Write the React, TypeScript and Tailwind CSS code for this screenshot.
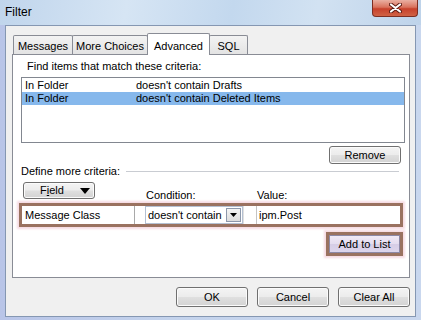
import React from 'react'

const btn =
  'flex items-center justify-center rounded-[3px] border border-[#707070] bg-[linear-gradient(#f4f4f4,#ececec_48%,#dfdfdf_52%,#d3d3d3)] shadow-[inset_0_0_0_1px_#fbfbfb] text-black'

function Tab({ label, active, w }: { label: string; active?: boolean; w: string }) {
  if (active) {
    return (
      <div
        className={`relative z-10 -ml-px -mb-px h-[22px] ${w} flex items-start justify-center pt-[4px] border border-b-0 border-[#898c95] bg-white rounded-t-[2px]`}
      >
        {label}
      </div>
    )
  }
  return (
    <div
      className={`${w} -ml-px first:ml-0 h-[19px] flex items-center justify-center pt-[2px] border border-b-0 border-[#898c95] bg-[linear-gradient(#f3f3f3,#e3e3e3)] rounded-t-[2px]`}
    >
      {label}
    </div>
  )
}

function CloseGlyph() {
  return (
    <svg width="13" height="10" viewBox="0 0 13 10">
      <path d="M2 1.5 L11 8.5 M11 1.5 L2 8.5" stroke="#5a1a12" strokeWidth="4" strokeLinecap="round" />
      <path d="M2 1.5 L11 8.5 M11 1.5 L2 8.5" stroke="#ffffff" strokeWidth="2.2" strokeLinecap="round" />
    </svg>
  )
}

export default function App() {
  return (
    <div className="w-[421px] h-[320px] flex flex-col bg-[linear-gradient(90deg,#b9c5e8,#c4d3ec_40%,#c9d7ee)] font-['Liberation_Sans',Arial,sans-serif] text-[11px] text-black overflow-hidden">
      {/* title bar */}
      <div className="h-[25px] flex items-start justify-between bg-[linear-gradient(100deg,#c0d5ec,#d6e5f4_30%,#c3d8ee_55%,#d2e2f2_75%,#bed3ea)]">
        <span className="pl-[5px] pt-[5px] text-[12px] leading-[14px]">Filter</span>
        <div className="mr-[3px] w-[46px] h-[17px] rounded-b-[4px] border border-t-0 border-[#7d2e22] bg-[linear-gradient(#eab0a2,#d9725d_45%,#c7412b_55%,#d06245)] flex items-center justify-center">
          <CloseGlyph />
        </div>
      </div>

      {/* client area */}
      <div className="mx-[5px] h-[292px] border border-[#8597b2] bg-[#f0f0f0] flex flex-col">
        <div className="ml-[7px] mt-[7px] h-[21px] flex items-end">
          <Tab label="Messages" w="w-[60px]" />
          <Tab label="More Choices" w="w-[76px]" />
          <Tab label="Advanced" w="w-[63px]" active />
          <Tab label="SQL" w="w-[39px]" />
        </div>

        <div className="ml-[6px] w-[398px] h-[224px] border border-[#898c95] bg-white flex flex-col">
          <div className="mt-[4px] ml-[14px] h-[14px] leading-[14px]">Find items that match these criteria:</div>

          <div className="mt-[4px] ml-[8px] w-[384px] h-[66px] border border-[#828790] bg-white pt-[1px]">
            <div className="h-[13px] flex items-center pl-[3px] leading-[13px]">
              <span className="w-[111px]">In Folder</span>
              <span>doesn&apos;t contain Drafts</span>
            </div>
            <div className="h-[13px] flex items-center pl-[3px] leading-[13px] bg-[#86b8ec]">
              <span className="w-[111px]">In Folder</span>
              <span>doesn&apos;t contain Deleted Items</span>
            </div>
          </div>

          <div className={`${btn} mt-[3px] mr-[8px] self-end w-[72px] h-[18px]`}>Remove</div>

          <div className="ml-[8px] mr-[10px] h-[14px] flex items-center">
            <span className="leading-[14px]">Define more criteria:</span>
            <div className="ml-[6px] flex-1 h-px bg-[#c9ccd2]" />
          </div>

          <div className="mt-[4px] h-[20px] flex items-start">
            <div className={`${btn} ml-[10px] w-[72px] h-[17px] !justify-between pl-[16px] pr-[4px]`}>
              <span>
                F<span className="underline">i</span>eld
              </span>
              <svg width="10" height="6" viewBox="0 0 10 6">
                <path d="M0 0 H10 L5 6 Z" fill="#000" />
              </svg>
            </div>
            <span className="ml-[51px] mt-[6px] w-[111px] h-[14px] leading-[14px]">Condition:</span>
            <span className="mt-[6px] h-[14px] leading-[14px]">Value:</span>
          </div>

          <div className="mt-[1px] ml-[6px] w-[384px] h-[24px] border-[3px] border-[#9a7260] shadow-[0_0_2px_2px_#f6dbe3] flex bg-white">
            <div className="w-[113px] flex items-center pl-[3px] border-r border-[#a9a9a9]">Message Class</div>
            <div className="w-[10px]" />
            <div className="w-[98px] flex items-center justify-between pl-[2px] pr-[1px] border border-[#b4c0d2]">
              <span>doesn&apos;t contain</span>
              <div className="w-[15px] h-[14px] border border-[#8d98ab] bg-[linear-gradient(#f4f4f4,#dcdcdc)] flex items-center justify-center">
                <svg width="7" height="4" viewBox="0 0 7 4">
                  <path d="M0 0 H7 L3.5 4 Z" fill="#000" />
                </svg>
              </div>
            </div>
            <div className="w-[13px] border-l border-[#e0e0e0]" />
            <div className="flex-1 flex items-center pl-[2px] border-l border-[#c4c4c4]">ipm.Post</div>
          </div>

          <div className="mt-[5px] mr-[6px] self-end w-[77px] h-[24px] border-[3px] border-[#9a7260] shadow-[0_0_2px_2px_#f6dbe3]">
            <div className="w-full h-full flex items-center justify-center border border-[#8c88a6] bg-[linear-gradient(#f0e9f6,#e4dcef_50%,#d6cde6_52%,#ddd5ec)]">
              Add to List
            </div>
          </div>
        </div>

        <div className="mt-[9px] mr-[5px] flex justify-end gap-[9px]">
          <div className={`${btn} w-[72px] h-[20px]`}>OK</div>
          <div className={`${btn} w-[72px] h-[20px]`}>Cancel</div>
          <div className={`${btn} w-[72px] h-[20px]`}>Clear All</div>
        </div>
      </div>
    </div>
  )
}
